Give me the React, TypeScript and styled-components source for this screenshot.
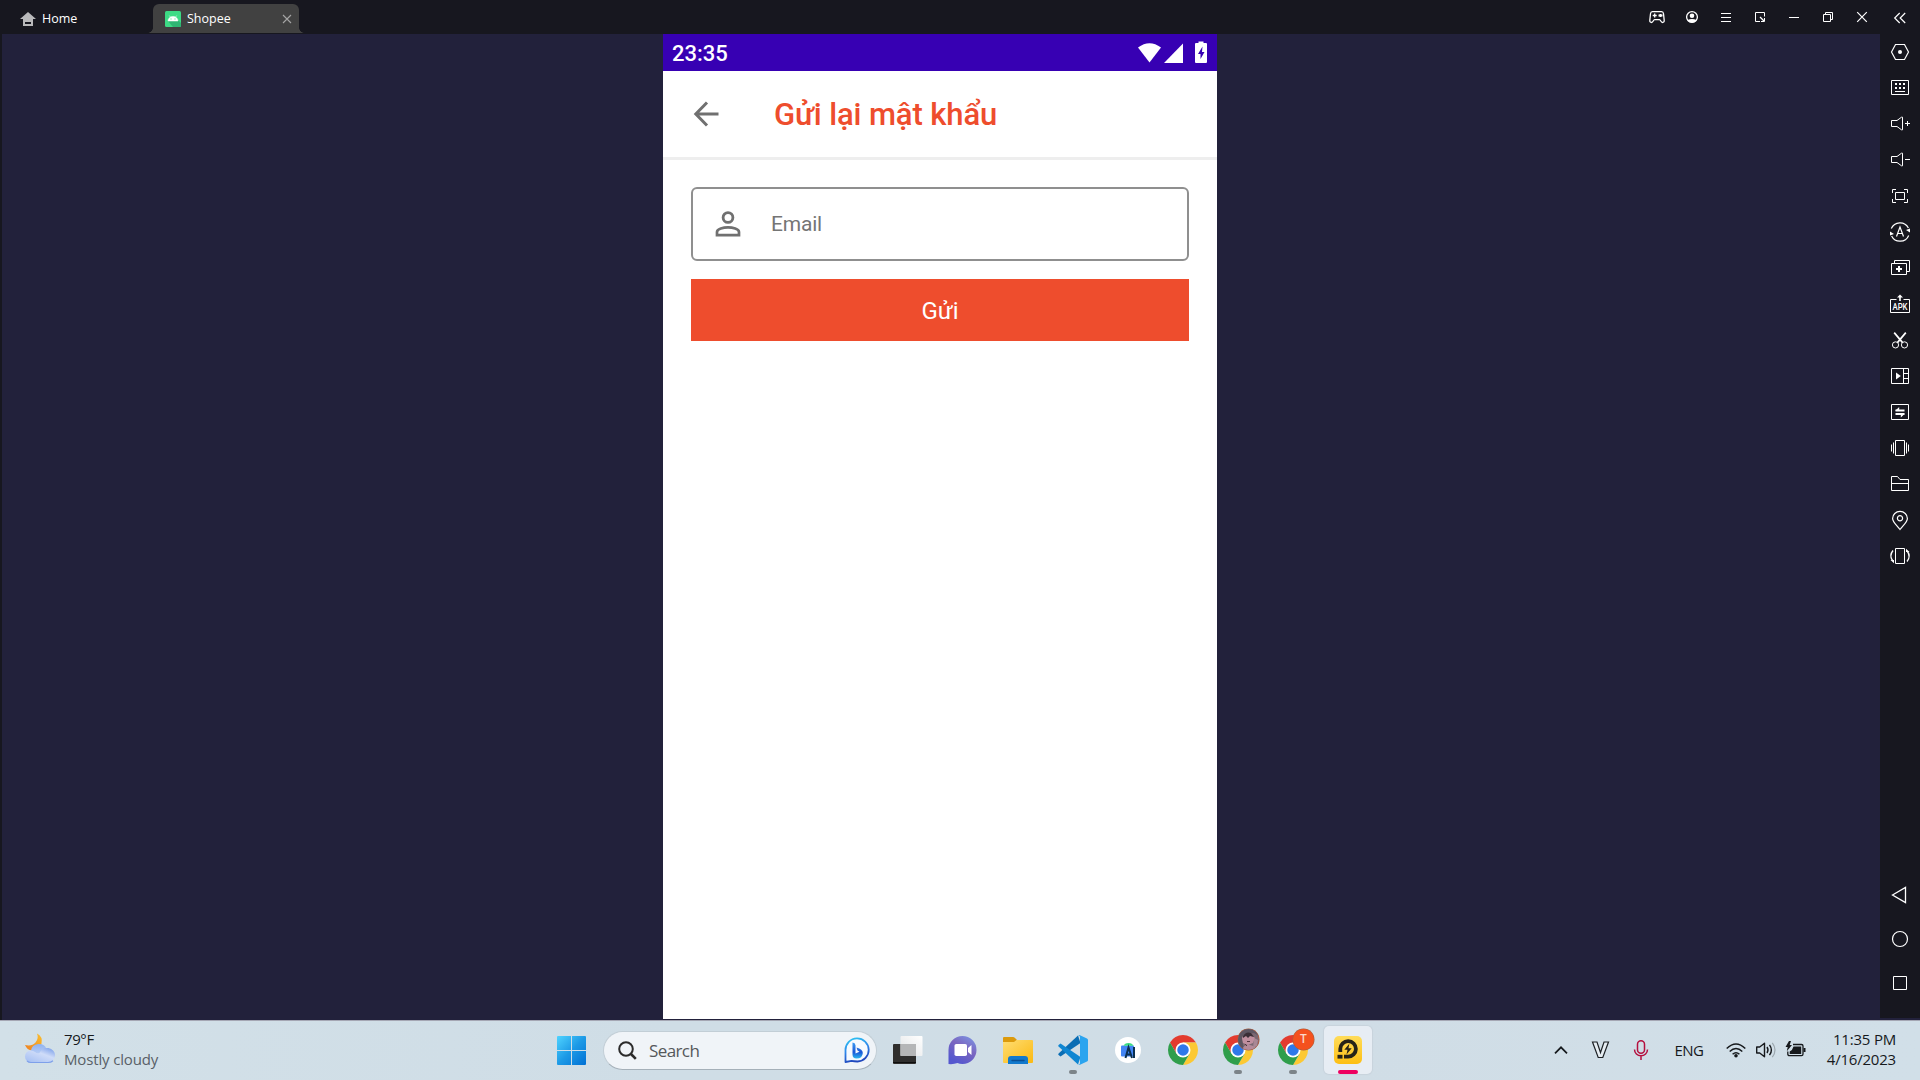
import React from "react";
import styled, { createGlobalStyle } from "styled-components";

const GlobalStyle = createGlobalStyle`
  * { box-sizing: border-box; }
  html, body { margin: 0; padding: 0; background: #17171f; }
  body { width: 1920px; height: 1080px; overflow: hidden; }
`;

const systemFont = `"Open Sans", "Noto Sans", sans-serif`;
const androidFont = `Roboto, "Noto Sans", sans-serif`;

const Desktop = styled.div`
  display: flex;
  flex-direction: column;
  width: 1920px;
  height: 1080px;
  background: #17171f;
  font-family: ${systemFont};
`;

const Glyph = styled.svg<{ $w: number; $h?: number }>`
  display: block;
  flex: none;
  width: ${(p) => p.$w}px;
  height: ${(p) => p.$h ?? p.$w}px;
  overflow: visible;
`;

/* ---------- Emulator title bar ---------- */

const TitleBar = styled.header`
  display: flex;
  height: 34px;
  flex: none;
`;

const HomeTab = styled.div`
  display: flex;
  align-items: center;
  width: 153px;
  padding: 3px 0 0 20px;
  gap: 6px;
  color: #fff;
  font-size: 12.5px;
`;

const AppTab = styled.div`
  position: relative;
  display: flex;
  align-items: center;
  width: 146px;
  height: 29px;
  margin-top: 4px;
  padding: 0 7px 0 12px;
  gap: 6px;
  border-radius: 6px 6px 0 0;
  background: #414141;
  color: #fff;
  font-size: 12.5px;

  &::before,
  &::after {
    content: "";
    position: absolute;
    bottom: 0;
    width: 5px;
    height: 5px;
  }
  &::before {
    left: -5px;
    background: radial-gradient(circle at 0 0, transparent 4.5px, #414141 5px);
  }
  &::after {
    right: -5px;
    background: radial-gradient(circle at 100% 0, transparent 4.5px, #414141 5px);
  }
`;

const TabLabel = styled.span`
  flex: 1;
  line-height: 18px;
  padding-top: 1px;
  white-space: nowrap;
`;

const WindowButtons = styled.div`
  display: flex;
  margin-left: auto;
`;

const WindowButton = styled.div<{ $w?: number }>`
  display: flex;
  align-items: center;
  justify-content: center;
  width: ${(p) => p.$w ?? 34}px;
  height: 34px;
`;

/* ---------- Emulator body ---------- */

const Body = styled.div`
  display: flex;
  height: 986px;
  flex: none;
  background: #22213b;
  border-left: 2px solid #17171f;
`;

const Stage = styled.main`
  display: flex;
  flex: 1;
  padding-left: 661px;
`;

const ToolColumn = styled.aside`
  display: flex;
  flex-direction: column;
  width: 40px;
  height: 984px;
  padding-bottom: 13px;
  background: #17171f;
`;

const ToolButton = styled.div<{ $h?: number }>`
  display: flex;
  align-items: center;
  justify-content: center;
  height: ${(p) => p.$h ?? 36}px;
`;

const NavGroup = styled.div`
  margin-top: auto;
`;

/* ---------- Android screen ---------- */

const Phone = styled.section`
  display: flex;
  flex-direction: column;
  width: 554px;
  height: 985px;
  background: #fff;
  font-family: ${androidFont};
`;

const StatusBar = styled.div`
  display: flex;
  align-items: center;
  height: 37px;
  padding: 0 9px 0 9px;
  background: #3700b3;
  color: #fff;
`;

const Clock = styled.span`
  flex: 1;
  font-size: 22px;
  font-weight: 500;
  line-height: 34px;
  padding-top: 3px;
`;

const StatusIcons = styled.div`
  display: flex;
  align-items: center;
  gap: 3px;
`;

const AppHeader = styled.div`
  display: flex;
  align-items: center;
  height: 89px;
  padding-left: 31px;
  border-bottom: 3px solid #eeeeee;
`;

const Title = styled.h1`
  margin: 0 0 0 55px;
  padding-top: 2px;
  color: #ee4d2d;
  font-size: 31px;
  font-weight: 500;
  letter-spacing: -0.12px;
  line-height: 40px;
  white-space: nowrap;
`;

const Form = styled.div`
  display: flex;
  flex-direction: column;
  gap: 18px;
  padding: 27px 28px 0;
`;

const Field = styled.div`
  display: flex;
  align-items: center;
  height: 74px;
  padding-left: 22px;
  border: 2px solid #8f8f8f;
  border-radius: 6px;
`;

const Placeholder = styled.span`
  margin-left: 30px;
  color: #757575;
  font-size: 21px;
  letter-spacing: -0.2px;
`;

const SendButton = styled.div`
  display: flex;
  align-items: center;
  justify-content: center;
  height: 62px;
  padding-top: 2px;
  background: #ee4d2d;
  color: #fff;
  font-size: 24px;
`;

/* ---------- Windows taskbar ---------- */

const Taskbar = styled.footer`
  display: flex;
  align-items: center;
  height: 60px;
  flex: none;
  background: linear-gradient(90deg, #d2e0e8, #cfdde6 35%, #d0dde6 70%, #d1dfe8);
  box-shadow: inset 0 1px 0 #a5a7b4;
`;

const Weather = styled.div`
  display: flex;
  align-items: center;
  width: 547px;
  padding-left: 24px;
  gap: 8px;
`;

const Lines = styled.div<{ $right?: boolean }>`
  display: flex;
  flex-direction: column;
  padding-bottom: 2px;
  text-align: ${(p) => (p.$right ? "right" : "left")};
  font-size: 15px;
  line-height: 20px;
  white-space: nowrap;
`;

const Line = styled.span<{ $muted?: boolean; $spacing?: number }>`
  color: ${(p) => (p.$muted ? "#596067" : "#16191c")};
  letter-spacing: ${(p) => p.$spacing ?? 0}px;
`;

const SearchBox = styled.div`
  display: flex;
  align-items: center;
  width: 274px;
  height: 39px;
  margin: 0 7px 0 8px;
  padding: 0 6px 0 14px;
  border: 1px solid #c2ced6;
  border-bottom-color: #a5b0b9;
  border-radius: 20px;
  background: #f0f4f8;
`;

const SearchText = styled.span`
  flex: 1;
  margin-left: 12px;
  font-size: 17px;
  color: #55585b;
  letter-spacing: -0.6px;
  padding-top: 1px;
`;

const Apps = styled.div`
  display: flex;
  gap: 7px;
`;

const AppTile = styled.div<{ $active?: boolean }>`
  position: relative;
  display: flex;
  align-items: center;
  justify-content: center;
  width: 48px;
  height: 48px;
  border-radius: 5px;
  background: ${(p) => (p.$active ? "#e7edf4" : "transparent")};
  box-shadow: ${(p) => (p.$active ? "0 0 1px 1px #c8d3dc" : "none")};
`;

const Indicator = styled.i<{ $active?: boolean }>`
  position: absolute;
  bottom: 0;
  left: 50%;
  width: ${(p) => (p.$active ? 20 : 8)}px;
  height: 4px;
  border-radius: 2px;
  transform: translateX(-50%);
  background: ${(p) => (p.$active ? "#ee0060" : "#7c8489")};
`;

const Badge = styled.div`
  position: absolute;
  top: 3px;
  left: 24px;
  width: 21px;
  height: 21px;
  border-radius: 50%;
  background: #f4511e;
  box-shadow: 0 0 0 0.5px #a8603f;
  color: #fbd7c9;
  font-size: 12px;
  font-weight: 600;
  line-height: 20px;
  text-align: center;
  overflow: hidden;
`;

const Tray = styled.div`
  display: grid;
  grid-template-columns: 40px 40px 40px 56px 38px 22px 38px 81px;
  align-items: center;
  justify-items: center;
  margin-left: auto;
  padding-right: 24px;

  & > :last-child {
    justify-self: end;
  }
`;

const Language = styled.span`
  padding-bottom: 1px;
  font-size: 15px;
  color: #16191c;
  letter-spacing: -0.5px;
`;

/* ---------- Line glyphs ---------- */

const Line20: React.FC<{ children: React.ReactNode }> = ({ children }) => (
  <Glyph $w={20} viewBox="-10 -10 20 20" fill="none" stroke="#fff" strokeWidth={1}>
    {children}
  </Glyph>
);

const Speaker = () => <path d="M-8.5 -3.5h5.5l4.5 -3.3h1v12.6h-1l-4.5 -3.3h-5.5z" />;

const tools: React.ReactNode[] = [
  <>
    <path d="M-8.5 0L-4.5 -7.5h9L8.5 0l-4 7.5h-9z" strokeWidth="1.2" />
    <circle r="2" fill="#fff" stroke="none" />
  </>,
  <>
    <path d="M-8.5 -7.5h17v14h-17zM-5 3.5h10" />
    <path d="M-5 -4h2M-1 -4h2M3 -4h2M-5 0h2M-1 0h2M3 0h2" strokeWidth="2" />
  </>,
  <>
    <Speaker />
    <path d="M5 -.5h5M7.5 -3v5" />
  </>,
  <>
    <Speaker />
    <path d="M5 -.5h5" />
  </>,
  <path d="M-4.5 -3.5h9v7h-9zM-7.5 -3v-3.5h3.5M4 -6.5h3.5v3.5M7.5 3v3.5h-3.5M-4 6.5h-3.5v-3.5" />,
  <>
    <path d="M-8.7 -3.4A9.4 9.4 0 0 1 8.4 -4M8.7 3.4A9.4 9.4 0 0 1 -8.4 4" strokeWidth="1.2" />
    <path d="M-3.5 4.5L0 -5l3.5 9.5M-2.3 1.5h4.6" strokeWidth="1.2" />
    <path d="M10 -3.5v4l-4 -2.5zM-10 3.5v-4l4 2.5z" fill="#fff" stroke="none" />
  </>,
  <>
    <path d="M-8.5 -4.5h15v11h-15zM-5.5 -4.5v-3h15v11h-3" />
    <path d="M-4 1h6M-1 -2v6" strokeWidth="2" />
  </>,
  <>
    <path d="M-3.5 -4.5h-6v13h19v-13h-6" />
    <path d="M0 -3v-5" strokeWidth="1.6" />
    <path d="M-3 -6.5L0 -9.5l3 3z" fill="#fff" stroke="none" />
    <text x="0" y="5.6" textAnchor="middle" fontFamily="Roboto, sans-serif" fontSize="8.6" fontWeight="500" textLength="15" lengthAdjust="spacingAndGlyphs" fill="#fff" stroke="none">
      APK
    </text>
  </>,
  <g transform="translate(0 .6)">
    <circle cx="-4.5" cy="4.3" r="3.1" />
    <circle cx="4.5" cy="4.3" r="3.1" />
    <path d="M-2.6 2L5.8 -8M2.6 2L-5.8 -8" strokeWidth="1.7" />
  </g>,
  <>
    <path d="M-8.5 -7.5h17v15h-17zM3.5 -7.5v15M3.5 -2.5h5M3.5 2.5h5" />
    <path d="M-4 -3.5L.8 0l-4.8 3.5z" fill="#fff" stroke="none" />
  </>,
  <>
    <path d="M-8.5 -7.5h17v15h-17z" />
    <path d="M-4.5 -1.5h9M4.5 2h-9" strokeWidth="2" />
    <path d="M-4.8 -1.3l4 -3.7v3.7zM4.8 1.8l-4 3.7v-3.7z" fill="#fff" stroke="none" />
  </>,
  <path d="M-4.5 -7.5h9v15h-9zM-6.5 -5.5v11M6.5 -5.5v11M-8.5 -3.5v7M8.5 -3.5v7" />,
  <path d="M-8.5 6.5v-14h6l2.5 3h8.5v11zM-8.5 -.5h17" />,
  <>
    <path d="M0 9.5C-3 5.5 -7.4 2 -7.4 -1.6a7.4 7 0 0 1 14.8 0C7.4 2 3 5.5 0 9.5z" strokeWidth="1.2" />
    <circle cy="-1.8" r="2.6" strokeWidth="1.2" />
  </>,
  <>
    <path d="M-4.5 -7.5h9v15h-9z" />
    <path d="M-7 -5.5Q-11 -.5 -7.5 4.5M7 5.5Q11 .5 7.5 -4.5" strokeWidth="1.4" />
    <path d="M-9.5 4h3.5v3.2zM9.5 -4h-3.5v-3.2z" fill="#fff" stroke="none" />
  </>,
];

const navKeys: React.ReactNode[] = [
  <path d="M-7.5 0L5.5 -7.5v15z" strokeWidth="1.3" />,
  <circle r="7.5" strokeWidth="1.2" />,
  <path d="M-6.5 -6.5h13v13h-13z" />,
];

const windowGlyphs: React.ReactNode[] = [
  <>
    <path d="M-5.5 -5.3h9q1.8 0 2 2l.7 6.5q.2 2.3 -1.8 2.3c-1.5 0 -1.7 -2.8 -3 -2.8h-4.8c-1.3 0 -1.5 2.8 -3 2.8q-2 0 -1.8 -2.3l.7 -6.5q.2 -2 2 -2z" strokeWidth="1.3" />
    <path d="M-5.3 -1.5h4M-3.3 -3.5v4" strokeWidth="1.3" />
    <path d="M.5 -1.5h4M2.5 -3v3" strokeWidth="1.8" />
  </>,
  <>
    <circle r="5.4" strokeWidth="1.3" />
    <circle cy="-1.2" r="2.3" fill="#fff" stroke="none" />
    <path d="M-4.8 3.3Q0 .5 4.8 3.3Q3 5.8 0 5.8T-4.8 3.3z" fill="#fff" stroke="none" />
  </>,
  <path d="M-5 -3.5H5M-5 .5H5M-5 4.5H5" />,
  <>
    <path d="M4.5 -.5v-4h-9v9H0M1 4.5h3.5V1" />
    <path d="M0 0l4 4" strokeWidth="1.3" />
  </>,
  <path d="M-5 .5H5" />,
  <path d="M-4.5 -2.5h7v7h-7zM-2.5 -2.5v-2h7v7h-2" />,
  <path d="M-4.8 -4.8l9.6 9.6M4.8 -4.8l-9.6 9.6" strokeWidth="1.2" />,
  <path d="M-.3 -4l-5 5 5 5M5.2 -4l-5 5 5 5" strokeWidth="1.2" />,
];

/* ---------- Colour icons ---------- */

const ChromeIcon = () => (
  <Glyph $w={30} viewBox="0 0 24 24">
    <path d="M1.61 6A12 12 0 0 1 22.39 6H12L6.8 15z" fill="#e33b2e" />
    <path d="M22.39 6A12 12 0 0 1 12 24L17.2 15 12 6z" fill="#fcc934" />
    <path d="M12 24A12 12 0 0 1 1.61 6L6.8 15H17.2z" fill="#2f9e4b" />
    <circle cx="12" cy="12" r="6" fill="#fff" />
    <circle cx="12" cy="12" r="4.6" fill="#2f78ea" />
  </Glyph>
);

const WeatherIcon = () => (
  <Glyph $w={32} $h={32} viewBox="0 0 32 32">
    <defs>
      <linearGradient id="moon" x1="1" y1="0" x2="0" y2="1">
        <stop offset="0" stopColor="#fbc02d" />
        <stop offset="1" stopColor="#ee7f22" />
      </linearGradient>
      <linearGradient id="cloudBack" x1="0" y1="0" x2="0" y2="1">
        <stop offset="0" stopColor="#8fb2f0" />
        <stop offset="1" stopColor="#c3d5f7" />
      </linearGradient>
      <linearGradient id="cloudFront" x1="1" y1="0" x2=".2" y2="1">
        <stop offset="0" stopColor="#6f97e8" />
        <stop offset=".45" stopColor="#cfdcf8" />
        <stop offset="1" stopColor="#a8c1f3" />
      </linearGradient>
    </defs>
    <g transform="translate(0 -1.5)">
      <path d="M13 1q6 3 4.5 10T8 18Q3 17.5 1 12.5Q8 14 11.5 10T13 1z" fill="url(#moon)" />
      <path d="M7 18a8 7.5 0 0 1 15.5 -1.5L20 24H8z" fill="url(#cloudBack)" />
      <path d="M6.5 30a5.5 6 0 0 1 0 -12q3 0 4.5 1.5 2 2 4.5 1A8 7.3 0 1 1 24 30z" fill="url(#cloudFront)" />
      <path d="M3 28.3Q4.5 30 7 30h17q3 0 5 -1.7" fill="none" stroke="#7ea0ea" strokeWidth="1.2" />
    </g>
  </Glyph>
);

const StartIcon = () => (
  <Glyph $w={30} viewBox="0 0 30 30">
    <defs>
      <linearGradient id="start" gradientUnits="userSpaceOnUse" x1="1" y1="1" x2="30" y2="30">
        <stop offset="0" stopColor="#4fd3ff" />
        <stop offset=".5" stopColor="#1d9ae6" />
        <stop offset="1" stopColor="#0070d4" />
      </linearGradient>
    </defs>
    <path d="M2 1h13v14H1V2q0-1 1-1zM16 1h13q1 0 1 1v13H16zM1 16h14v14H2q-1 0-1-1zM16 16h14v13q0 1-1 1H16z" fill="url(#start)" />
  </Glyph>
);

const BingIcon = () => (
  <Glyph $w={26} viewBox="0 0 26 26">
    <defs>
      <linearGradient id="bingRing" x1="0" y1="0" x2=".3" y2="1">
        <stop offset="0" stopColor="#2cc8f2" />
        <stop offset=".55" stopColor="#2f86ea" />
        <stop offset="1" stopColor="#2148bd" />
      </linearGradient>
      <linearGradient id="bingMark" x1="0" y1="0" x2="0" y2="1">
        <stop offset="0" stopColor="#3b9cf2" />
        <stop offset=".6" stopColor="#1a55d6" />
        <stop offset="1" stopColor="#2cb7f0" />
      </linearGradient>
    </defs>
    <path d="M1.5 25L1.5 13A11.6 11.6 0 1 1 13.5 24.5Q10 24.2 7.5 23.8z" fill="#f6faff" stroke="url(#bingRing)" strokeWidth="1.8" strokeLinejoin="round" />
    <path d="M8.5 5.5q2.8 .3 3 2.8v8.2l4 -1.8 -2 -1.3 -1 -3q6.3 1.5 6.3 5.5 -.3 5.5 -6.3 5.6 -4 -.2 -4 -4z" fill="url(#bingMark)" />
  </Glyph>
);

const TaskViewIcon = () => (
  <Glyph $w={30} viewBox="0 0 30 30">
    <defs>
      <linearGradient id="pane" x1="1" y1="0" x2="0" y2="1">
        <stop offset="0" stopColor="#fff" />
        <stop offset="1" stopColor="#e2e4e6" />
      </linearGradient>
    </defs>
    <rect x="0" y="9" width="23" height="20" rx="1" fill="#2f2e2d" />
    <rect x="7.5" y="1" width="22" height="20" rx="1" fill="url(#pane)" />
    <path d="M7.5 9H23v12H7.5z" fill="#b5b6b7" />
    <path d="M0 27.5h23" stroke="#0f0f0f" />
  </Glyph>
);

const ChatIcon = () => (
  <Glyph $w={30} viewBox="0.5 0 30 30">
    <defs>
      <linearGradient id="chat" x1="1" y1="0" x2=".4" y2="1">
        <stop offset="0" stopColor="#7c9be8" />
        <stop offset=".5" stopColor="#7b66c0" />
        <stop offset="1" stopColor="#5457cf" />
      </linearGradient>
    </defs>
    <path d="M1 29V15A14 14 0 1 1 15 29q-3 0-5-1Q6 29.5 1 29z" fill="url(#chat)" />
    <rect x="7" y="9" width="12.5" height="12" rx="1.8" fill="#fff" />
    <path d="M20.5 13l3.5-3v10l-3.5-3z" fill="#fff" />
  </Glyph>
);

const FolderIcon = () => (
  <Glyph $w={30} viewBox="0 0 30 30">
    <defs>
      <linearGradient id="folder" x1="0" y1="0" x2="1" y2="1">
        <stop offset="0" stopColor="#ffdd73" />
        <stop offset="1" stopColor="#fbb912" />
      </linearGradient>
    </defs>
    <path d="M0 3q0-1 1-1h9q1 0 2 1l2 2v5H0z" fill="#dc9a0c" />
    <path d="M0 7h11l2.5-2H29q1 0 1 1v21q0 1-1 1H1q-1 0-1-1z" fill="url(#folder)" />
    <path d="M5 29v-5q0-3 3-3h14q3 0 3 3v5z" fill="#1279cd" />
    <path d="M9 25.5h12" stroke="#0a4f94" strokeWidth="1.4" strokeLinecap="round" />
  </Glyph>
);

const VsCodeIcon = () => (
  <Glyph $w={30} viewBox="0 0 30 30">
    <path d="M2.5 21.5L.6 20q-.8-.8 0-1.6L20 .5 22.5 8z" fill="#0a6db4" />
    <path d="M2.5 8.5L.6 10q-.8 .8 0 1.6L20 29.5 22.5 22z" fill="#0f86d2" />
    <path d="M20.5 .2Q21.3 -.2 22 .2L29 3.5q1 .5 1 1.5v20q0 1-1 1.5L22 29.8q-1 .4-2-.3 2 .5 2-1.5V2q0-2-2-1.5z" fill="#2ba4ef" />
  </Glyph>
);

const StudioIcon = () => (
  <Glyph $w={26} viewBox="0 0 26 26">
    <circle cx="13" cy="13" r="13" fill="#fff" />
    <rect x="6" y="8.5" width="13" height="11" rx="1" fill="#4285f4" />
    <path d="M8.5 8.8a5.2 4 0 0 1 10 0z" fill="#3ddc84" />
    <path d="M10.5 21l3-10.5 3.5 10.5M11.5 17.5h4.5M19 10v11" fill="none" stroke="#0b3050" strokeWidth="2" />
  </Glyph>
);

const PlayerIcon = () => (
  <Glyph $w={28} viewBox="0 0 28 28">
    <defs>
      <linearGradient id="player" x1="0" y1="0" x2="0" y2="1">
        <stop offset="0" stopColor="#ffdc5a" />
        <stop offset="1" stopColor="#fdbf14" />
      </linearGradient>
    </defs>
    <rect width="28" height="28" rx="5" fill="url(#player)" />
    <path d="M6.3 16V12.7a7.8 7.8 0 1 1 7.8 8H10" fill="none" stroke="#262318" strokeWidth="3.8" />
    <path d="M3.5 18.8h5v3.8h-5z" fill="#262318" />
    <path d="M15.3 7.8l-5 6h3.2l-1 4.6 5.2-6.2h-3.2z" fill="#262318" />
  </Glyph>
);

const PortraitIcon = () => (
  <Glyph $w={21} viewBox="0 0 21 21">
    <rect width="21" height="21" fill="#7b6872" />
    <path d="M0 0h21v7L16 4 8 5 4 10l2 11H0z" fill="#5d5561" />
    <path d="M4 9q2-5 8-4l5 4-2 5-5 2-5-2z" fill="#c08f9f" />
    <path d="M5 7q3-5 8-3l3 4-4-1-2 2-2-2-3 2z" fill="#3a2e36" />
    <path d="M4 21q2-6 8-5t7 5z" fill="#b48a99" />
    <path d="M16 9l4 2-1 6-4 2z" fill="#a98795" />
    <path d="M9 12.5h3M7 15l2 2" stroke="#54343f" />
  </Glyph>
);

const App: React.FC = () => (
  <Desktop>
    <GlobalStyle />
    <TitleBar>
      <HomeTab>
        <Glyph $w={16} $h={14} viewBox="0 0 16 14">
          <path d="M8 0l8 7h-3v7H3V7H0z" fill="#b9b9bb" />
          <path d="M5 10h6v2H5z" fill="#17171f" />
        </Glyph>
        <TabLabel>Home</TabLabel>
      </HomeTab>
      <AppTab>
        <Glyph $w={16} viewBox="0 0 16 16">
          <rect width="16" height="16" rx="1.5" fill="#3ddb85" />
          <path d="M3 10l5 6h6.5q1.5 0 1.5-1.5V12l-4-4z" fill="#2fb573" />
          <path d="M3 10a5 4.6 0 0 1 10 0zM4.3 4.5l1.4 2M11.7 4.5l-1.4 2" fill="#fff" stroke="#fff" strokeWidth=".5" />
          <path d="M5.5 8h1M9.5 8h1" stroke="#3ddb85" />
        </Glyph>
        <TabLabel>Shopee</TabLabel>
        <Glyph $w={10} viewBox="0 0 10 10">
          <path d="M1 1l8 8M9 1L1 9" stroke="#a5a5a5" strokeWidth="1.1" />
        </Glyph>
      </AppTab>
      <WindowButtons>
        {windowGlyphs.map((g, i) => (
          <WindowButton key={i} $w={i === 7 ? 41 : 34}>
            <Line20>{g}</Line20>
          </WindowButton>
        ))}
      </WindowButtons>
    </TitleBar>

    <Body>
      <Stage>
        <Phone>
          <StatusBar>
            <Clock>23:35</Clock>
            <StatusIcons>
              <Glyph $w={23} $h={20} viewBox="0 0 23 20">
                <path d="M0 4.5Q11.5-4 23 4.5L11.5 19.5z" fill="#fff" />
              </Glyph>
              <Glyph $w={19} $h={20} viewBox="0 0 19 20">
                <path d="M19 .5V20H0z" fill="#fff" />
              </Glyph>
              <Glyph $w={22} $h={22} viewBox="-9 1 22 22">
                <path d="M3.5 2V.5h5V2H11q1 0 1 1v18q0 1-1 1H1q-1 0-1-1V3q0-1 1-1z" fill="#fff" />
                <path d="M7.5 5.5L3 13h2.5v5L9.5 11H7z" fill="#3700b3" />
              </Glyph>
            </StatusIcons>
          </StatusBar>
          <AppHeader>
            <Glyph $w={25} $h={26} viewBox="0 0 25 26">
              <path d="M24.5 13H2.5M13 1.5L1.8 13l11.2 11.5" fill="none" stroke="#707070" strokeWidth="3" />
            </Glyph>
            <Title>Gửi lại mật khẩu</Title>
          </AppHeader>
          <Form>
            <Field>
              <Glyph $w={26} $h={26} viewBox="0 0 26 26">
                <circle cx="13" cy="6.5" r="4.9" fill="none" stroke="#707070" strokeWidth="2.8" />
                <path d="M2 24.2v-3.2c0-3.2 6.5-4.7 11-4.7s11 1.5 11 4.7v3.2z" fill="none" stroke="#707070" strokeWidth="2.7" />
              </Glyph>
              <Placeholder>Email</Placeholder>
            </Field>
            <SendButton>Gửi</SendButton>
          </Form>
        </Phone>
      </Stage>
      <ToolColumn>
        {tools.map((g, i) => (
          <ToolButton key={i}>
            <Line20>{g}</Line20>
          </ToolButton>
        ))}
        <NavGroup>
          {navKeys.map((g, i) => (
            <ToolButton key={i} $h={44}>
              <Line20>{g}</Line20>
            </ToolButton>
          ))}
        </NavGroup>
      </ToolColumn>
    </Body>

    <Taskbar>
      <Weather>
        <WeatherIcon />
        <Lines>
          <Line $spacing={-0.4}>79°F</Line>
          <Line $muted $spacing={-0.15}>Mostly cloudy</Line>
        </Lines>
      </Weather>
      <AppTile>
        <StartIcon />
      </AppTile>
      <SearchBox>
        <Glyph $w={19} viewBox="0 0 19 19">
          <circle cx="8" cy="8" r="6.8" fill="none" stroke="#2b2b2b" strokeWidth="2" />
          <path d="M13 13l4.8 4.8" stroke="#2b2b2b" strokeWidth="2.6" />
        </Glyph>
        <SearchText>Search</SearchText>
        <BingIcon />
      </SearchBox>
      <Apps>
        <AppTile><TaskViewIcon /></AppTile>
        <AppTile><ChatIcon /></AppTile>
        <AppTile><FolderIcon /></AppTile>
        <AppTile><VsCodeIcon /><Indicator /></AppTile>
        <AppTile><StudioIcon /></AppTile>
        <AppTile><ChromeIcon /></AppTile>
        <AppTile><ChromeIcon /><Badge><PortraitIcon /></Badge><Indicator /></AppTile>
        <AppTile><ChromeIcon /><Badge>T</Badge><Indicator /></AppTile>
        <AppTile $active><PlayerIcon /><Indicator $active /></AppTile>
      </Apps>
      <Tray>
        <Glyph $w={14} $h={8} viewBox="0 0 14 8">
          <path d="M1 7.3l6-6 6 6" fill="none" stroke="#16191c" strokeWidth="1.7" />
        </Glyph>
        <Glyph $w={18} viewBox="0.5 0.5 18 18">
          <path d="M1 1.5h4.5L9 12l3.5-10.5H17L11.3 17H6.7z" fill="#e6edf2" stroke="#1c2024" strokeWidth="1.2" />
        </Glyph>
        <Glyph $w={16} $h={20} viewBox="0 0 16 20">
          <rect x="4.5" y=".8" width="7" height="12.5" rx="3.5" fill="none" stroke="#b5103f" strokeWidth="1.5" />
          <path d="M1.5 9.5a6.5 6.3 0 0 0 13 0M8 16v4" fill="none" stroke="#b5103f" strokeWidth="1.5" />
        </Glyph>
        <Language>ENG</Language>
        <Glyph $w={20} $h={15} viewBox="0 0 20 15">
          <path d="M.7 5.5Q10-3.5 19.3 5.5M3.7 8.5Q10 2.5 16.3 8.5M6.6 11.3Q10 8.2 13.4 11.3" fill="none" stroke="#16191c" strokeWidth="1.5" />
          <circle cx="10" cy="12.8" r="1.8" fill="#16191c" />
        </Glyph>
        <Glyph $w={20} $h={16} viewBox="0 0 20 16">
          <path d="M.7 5h3L8.5 1.2v13.6L3.7 11h-3z" fill="none" stroke="#16191c" strokeWidth="1.4" strokeLinejoin="round" />
          <path d="M11 5q2 3 0 6M13.5 2.8q3.8 5.2 0 10.4" fill="none" stroke="#16191c" strokeWidth="1.4" />
          <path d="M16.3 .8q5.4 7.2 0 14.4" fill="none" stroke="#9da8af" strokeWidth="1.2" />
        </Glyph>
        <Glyph $w={20} $h={16} viewBox="0.5 1 20 16">
          <path d="M7.5 3.5h8.5q1.5 0 1.5 1.5v8q0 1.7-1.5 1.7H4Q2.3 14.7 2.3 13v-2.5" fill="none" stroke="#16191c" strokeWidth="1.3" />
          <path d="M8 5.5h7.7v7.5H4.2v-2.5q3-1.5 3.8-5zM18 7h2v4h-2z" fill="#16191c" />
          <path d="M3.5 0L0 6h2.2L1.3 10.3 6.5 4H4.2L5.5 0z" fill="#16191c" />
        </Glyph>
        <Lines $right>
          <Line $spacing={-0.2}>11:35 PM</Line>
          <Line $spacing={-0.2}>4/16/2023</Line>
        </Lines>
      </Tray>
    </Taskbar>
  </Desktop>
);

export default App;
